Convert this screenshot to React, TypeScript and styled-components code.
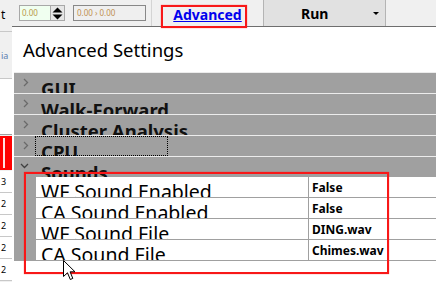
import React from 'react';
import styled, { createGlobalStyle } from 'styled-components';

const GlobalStyle = createGlobalStyle`
  html, body {
    margin: 0;
    padding: 0;
    background: #f0f0f0;
  }
  body {
    font-family: "Noto Sans", "DejaVu Sans", sans-serif;
    color: #000;
  }
`;

type Category = { name: string; open?: boolean; focused?: boolean };
type Prop = { name: string; value: string };

const categories: Category[] = [
  { name: 'GUI' },
  { name: 'Walk-Forward' },
  { name: 'Cluster Analysis' },
  { name: 'CPU', focused: true },
  { name: 'Sounds', open: true },
];

const sounds: Prop[] = [
  { name: 'WF Sound Enabled', value: 'False' },
  { name: 'CA Sound Enabled', value: 'False' },
  { name: 'WF Sound File', value: 'DING.wav' },
  { name: 'CA Sound File', value: 'Chimes.wav' },
];

const stripNumbers = ['3', '2', '2', '2', '2'];

const Chevron = ({ open }: { open?: boolean }) =>
  open ? (
    <svg width="9" height="6" viewBox="0 0 9 6">
      <path d="M1 1 L4.5 4.5 L8 1" fill="none" stroke="#404040" strokeWidth="1.3" />
    </svg>
  ) : (
    <svg width="6" height="9" viewBox="0 0 6 9">
      <path d="M1 1 L4.5 4.5 L1 8" fill="none" stroke="#6a6a6a" strokeWidth="1.3" />
    </svg>
  );

const SpinArrows = () => (
  <svg width="11" height="13" viewBox="0 0 11 13">
    <path d="M5.5 0.5 L10.5 5.5 L0.5 5.5 Z" fill="#000" />
    <path d="M0.5 7.5 L10.5 7.5 L5.5 12.5 Z" fill="#000" />
  </svg>
);

const Cursor = () => (
  <svg width="13" height="21" viewBox="0 0 13 21">
    <path
      d="M0.5 0.5 L0.5 16.5 L4.5 12.8 L7.3 19.5 L9.8 18.4 L7.1 11.8 L12 11.8 Z"
      fill="#fff"
      stroke="#000"
      strokeWidth="1"
      strokeLinejoin="miter"
    />
  </svg>
);

export default function App() {
  return (
    <>
      <GlobalStyle />
      <Screen>
        <Toolbar>
          <CutLabel>t</CutLabel>
          <NumBox>
            <NumField>0.00</NumField>
            <Spinner>
              <SpinArrows />
            </Spinner>
          </NumBox>
          <RangeBox>0.00 › 0.00</RangeBox>
          <LinkCell>
            <AdvancedLink>Advanced</AdvancedLink>
          </LinkCell>
          <RunButton>
            <RunLabel>Run</RunLabel>
            <DropArrow />
          </RunButton>
        </Toolbar>

        <Body>
          <Strip>
            <StripBlock $h={5} $bg="#f0f0f0" $line="#c8c8c8" />
            <StripBlock $h={46} $bg="#f0f0f0" $line="#c8c8c8">
              <StripText $color="#5a7fb0">ia</StripText>
            </StripBlock>
            <StripBlock $h={55} $bg="#ffffff" $line="#a0a0a0" />
            <RedCell />
            {stripNumbers.map((n, i) => (
              <StripBlock key={i} $h={21} $bg="#ffffff" $line="#c8c8c8">
                <StripText $color="#000">{n}</StripText>
              </StripBlock>
            ))}
          </Strip>

          <Popup>
            <Title>Advanced Settings</Title>
            <Tree>
              {categories.map((c) => (
                <CategoryRow key={c.name}>
                  <ChevronCell $open={c.open}>
                    <Chevron open={c.open} />
                  </ChevronCell>
                  <CategoryLabel $focused={c.focused}>{c.name}</CategoryLabel>
                </CategoryRow>
              ))}
              {sounds.map((p) => (
                <PropRow key={p.name}>
                  <Gutter />
                  <PropName>{p.name}</PropName>
                  <PropValue>{p.value}</PropValue>
                </PropRow>
              ))}
            </Tree>
          </Popup>
        </Body>

        <Highlight $x={161} $y={5} $w={86} $h={23} />
        <Highlight $x={24} $y={172} $w={365} $h={102} />
        <CursorWrap>
          <Cursor />
        </CursorWrap>
      </Screen>
    </>
  );
}

const Screen = styled.div`
  position: relative;
  width: 436px;
  height: 282px;
  overflow: hidden;
  display: flex;
  flex-direction: column;
  background: #f0f0f0;
`;

const Toolbar = styled.div`
  height: 26px;
  display: flex;
  align-items: stretch;
  background: #f0f0f0;
  flex-shrink: 0;
`;

const CutLabel = styled.div`
  width: 19px;
  padding-left: 1px;
  box-sizing: border-box;
  font-size: 12px;
  line-height: 26px;
  padding-top: 2px;
`;

const NumBox = styled.div`
  margin-top: 5px;
  width: 46px;
  height: 16px;
  box-sizing: border-box;
  border: 1px solid #a8a8a8;
  display: flex;
`;

const NumField = styled.div`
  flex: 1;
  background: #f0fff0;
  font-size: 8px;
  line-height: 14px;
  padding-left: 2px;
  color: #b89a4a;
`;

const Spinner = styled.div`
  width: 13px;
  background: #e6e6e6;
  border-left: 1px solid #a8a8a8;
  display: flex;
  align-items: center;
  justify-content: center;
`;

const RangeBox = styled.div`
  margin: 5px 0 0 8px;
  width: 73px;
  height: 16px;
  box-sizing: border-box;
  border: 1px solid #888;
  background: #efefef;
  font-size: 8px;
  line-height: 14px;
  padding-left: 3px;
  color: #c09050;
`;

const LinkCell = styled.div`
  margin-left: 5px;
  width: 111px;
  border-left: 1px solid #d4d4d4;
  display: flex;
  align-items: center;
  justify-content: center;
`;

const AdvancedLink = styled.a`
  color: #0000ee;
  font-weight: bold;
  font-size: 14px;
  text-decoration: underline;
  padding-top: 3px;
`;

const RunButton = styled.div`
  width: 123px;
  background: #e1e1e1;
  border-left: 1px solid #b4b4b4;
  border-right: 1px solid #b4b4b4;
  display: flex;
  align-items: center;
  padding-left: 37px;
  box-sizing: border-box;
`;

const RunLabel = styled.span`
  font-weight: bold;
  font-size: 14px;
  flex: 1;
  padding-top: 1px;
`;

const DropArrow = styled.span`
  width: 0;
  height: 0;
  border-left: 3px solid transparent;
  border-right: 3px solid transparent;
  border-top: 3px solid #000;
  margin-right: 6px;
`;

const Body = styled.div`
  flex: 1;
  display: flex;
  min-height: 0;
`;

const Strip = styled.div`
  width: 12px;
  display: flex;
  flex-direction: column;
  flex-shrink: 0;
`;

const StripBlock = styled.div<{ $h: number; $bg: string; $line: string }>`
  height: ${(p) => p.$h}px;
  flex-shrink: 0;
  background: ${(p) => p.$bg};
  border-bottom: 1px solid ${(p) => p.$line};
  display: flex;
  align-items: center;
`;

const StripText = styled.span<{ $color: string }>`
  font-size: 9px;
  padding-left: 1px;
  color: ${(p) => p.$color};
`;

const RedCell = styled.div`
  height: 34px;
  flex-shrink: 0;
  margin: 1px 0;
  background: #ff0000;
  border-left: 3px solid #ff0000;
  box-sizing: border-box;
  &::before {
    content: '';
    display: block;
    width: 2px;
    height: 30px;
    margin-top: 2px;
    background: #ffe0e0;
  }
`;

const Popup = styled.div`
  flex: 1;
  background: #fff;
  border-top: 1px solid #6e6e6e;
  display: flex;
  flex-direction: column;
`;

const Title = styled.div`
  height: 45px;
  padding-left: 11px;
  display: flex;
  align-items: center;
  font-size: 18.5px;
  flex-shrink: 0;
`;

const Tree = styled.div`
  margin-left: 2px;
  display: flex;
  flex-direction: column;
`;

const CategoryRow = styled.div`
  height: 20px;
  border-top: 1px solid #ececec;
  background: #a0a0a0;
  display: flex;
  flex-shrink: 0;
`;

const ChevronCell = styled.div<{ $open?: boolean }>`
  width: 21px;
  display: flex;
  justify-content: center;
  padding-top: ${(p) => (p.$open ? 6 : 5)}px;
  padding-left: ${(p) => (p.$open ? 0 : 2)}px;
  box-sizing: border-box;
`;

const CategoryLabel = styled.div<{ $focused?: boolean }>`
  height: 20px;
  box-sizing: border-box;
  overflow: hidden;
  padding: 3px 0 0 6px;
  min-width: 133px;
  font-size: 18.5px;
  font-weight: bold;
  line-height: 26px;
  color: #111;
  outline: ${(p) => (p.$focused ? '1px dotted #000' : 'none')};
  outline-offset: -1px;
`;

const PropRow = styled.div`
  height: 20px;
  border-bottom: 1px solid #a0a0a0;
  display: flex;
  flex-shrink: 0;
`;

const Gutter = styled.div`
  width: 22px;
  background: #a0a0a0;
  flex-shrink: 0;
`;

const PropName = styled.div`
  flex: 1;
  overflow: hidden;
  padding: 2px 0 0 5px;
  font-size: 19.5px;
  line-height: 26px;
  color: #000;
  white-space: nowrap;
`;

const PropValue = styled.div`
  width: 124px;
  flex-shrink: 0;
  border-left: 1px solid #a0a0a0;
  padding: 1px 0 0 3px;
  font-size: 12px;
  font-weight: bold;
  line-height: 20px;
`;

const Highlight = styled.div<{ $x: number; $y: number; $w: number; $h: number }>`
  position: absolute;
  left: ${(p) => p.$x}px;
  top: ${(p) => p.$y}px;
  width: ${(p) => p.$w}px;
  height: ${(p) => p.$h}px;
  box-sizing: border-box;
  border: 2px solid #f81818;
  box-shadow: 0 0 1px rgba(255, 0, 0, 0.6);
  pointer-events: none;
`;

const CursorWrap = styled.div`
  position: absolute;
  left: 63px;
  top: 260px;
  line-height: 0;
`;
